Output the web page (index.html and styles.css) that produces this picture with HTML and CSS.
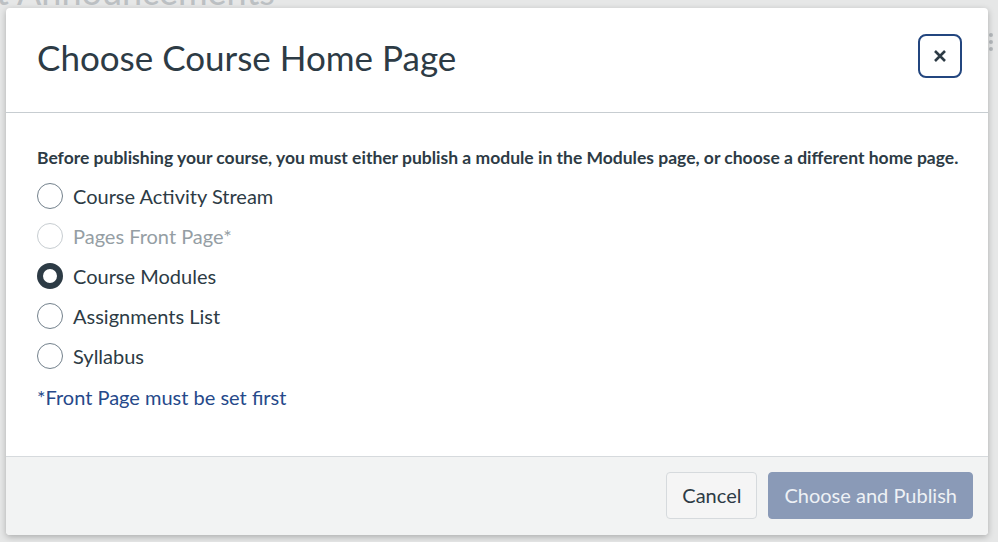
FILE: index.html
```html
<!DOCTYPE html>
<html lang="en">
<head>
<meta charset="utf-8">
<title>Choose Course Home Page</title>
<link rel="stylesheet" href="styles.css">
</head>
<body>
<div class="page">
  <h2 class="page-heading">Recent Announcements</h2>
  <div class="page-handle"><span></span><span></span><span></span></div>
</div>
<div class="overlay">
  <div class="modal" role="dialog" aria-labelledby="dlg-title">
    <header class="modal-header">
      <h1 id="dlg-title" class="modal-title">Choose Course Home Page</h1>
      <button class="close-btn" aria-label="Close">
        <svg width="14" height="14" viewBox="0 0 14 14"><path d="M2 2L12 12M12 2L2 12" stroke="#2d3b45" stroke-width="2.6" stroke-linecap="butt"/></svg>
      </button>
    </header>
    <div class="modal-body">
      <p class="notice">Before publishing your course, you must either publish a module in the Modules page, or choose a different home page.</p>
      <ul class="options">
        <li class="option"><span class="radio"></span>Course Activity Stream</li>
        <li class="option disabled"><span class="radio"></span>Pages Front Page*</li>
        <li class="option checked"><span class="radio"></span>Course Modules</li>
        <li class="option"><span class="radio"></span>Assignments List</li>
        <li class="option"><span class="radio"></span>Syllabus</li>
      </ul>
      <p class="footnote">*Front Page must be set first</p>
    </div>
    <footer class="modal-footer">
      <button class="btn btn-cancel">Cancel</button>
      <button class="btn btn-primary" disabled>Choose and Publish</button>
    </footer>
  </div>
</div>
</body>
</html>
```
FILE: styles.css
```css
* { box-sizing: border-box; }
html, body { margin: 0; padding: 0; }
body {
  width: 998px;
  height: 542px;
  overflow: hidden;
  background: #e6e7e7;
  font-family: Lato, "Liberation Sans", sans-serif;
  color: #2d3b45;
}
.page { position: relative; height: 542px; }
.page-heading {
  margin: 0;
  margin-top: -27px;
  margin-left: -100px;
  font-size: 36px;
  font-weight: 400;
  color: #bcc0c3;
  line-height: 36px;
  white-space: nowrap;
}
.page-handle {
  position: absolute;
  left: 989px;
  top: 60px;
  display: flex;
  flex-direction: column;
  gap: 3px;
}
.page-handle span {
  width: 4px; height: 4px; border-radius: 50%;
  background: #b5b9bc;
}
.overlay {
  position: absolute;
  left: 6px;
  top: 8px;
}
.modal {
  width: 982px;
  height: 527px;
  background: #fff;
  border-radius: 4px;
  box-shadow: 0 2px 6px rgba(0,0,0,0.25);
  display: flex;
  flex-direction: column;
  overflow: hidden;
}
.modal-header {
  height: 105px;
  border-bottom: 1px solid #c7cdd1;
  display: flex;
  align-items: center;
  justify-content: space-between;
  padding: 0 26px 6px 31px;
  flex-shrink: 0;
}
.modal-title {
  margin: 0;
  font-size: 35px;
  font-weight: 400;
  color: #2d3b45;
  letter-spacing: 0;
}
.close-btn {
  width: 44px;
  height: 44px;
  border: 2px solid #23467f;
  border-radius: 8px;
  background: #fff;
  display: flex;
  align-items: center;
  justify-content: center;
  padding: 0;
  margin-top: -2px;
}
.modal-body {
  flex: 1;
  padding: 33px 20px 0 31px;
}
.notice {
  margin: 0 0 6px;
  font-size: 17.5px;
  font-weight: 700;
  line-height: 24px;
  white-space: nowrap;
}
.options { list-style: none; margin: 0; padding: 0; }
.option {
  height: 40px;
  display: flex;
  align-items: center;
  gap: 10px;
  font-size: 20px;
  color: #2d3b45;
}
.radio {
  width: 26px;
  height: 26px;
  border-radius: 50%;
  border: 1px solid #73818c;
  background: #fff;
  flex-shrink: 0;
}
.option.disabled { color: #959ea4; }
.option.disabled .radio { border-color: #c7cdd1; }
.option.checked .radio { border: 6px solid #2d3b45; }
.footnote {
  margin: 9px 0 0;
  font-size: 20px;
  color: #26498a;
}
.modal-footer {
  height: 79px;
  background: #f2f3f3;
  border-top: 1px solid #d6dadd;
  display: flex;
  align-items: center;
  justify-content: flex-end;
  gap: 11px;
  padding: 0 15px 2px 0;
  flex-shrink: 0;
}
.btn {
  height: 47px;
  font-family: Lato, "Liberation Sans", sans-serif;
  font-size: 20px;
  border-radius: 4px;
  padding: 0 15px;
}
.btn-cancel {
  background: #f5f5f5;
  border: 1px solid #d6dadd;
  color: #2d3b45;
}
.btn-primary {
  background: #8a9ab7;
  border: 1px solid #8a9ab7;
  color: #eef1f5;
}
```
